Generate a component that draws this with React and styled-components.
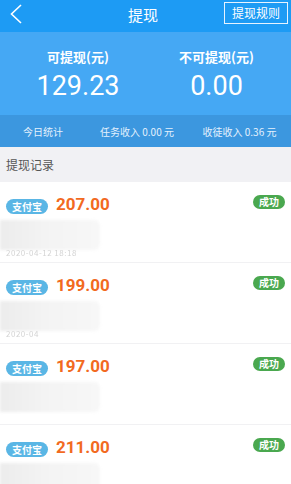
import React from "react";
import styled, { createGlobalStyle } from "styled-components";

const Global = createGlobalStyle`
  html, body { margin: 0; padding: 0; background: #ffffff; }
  body { font-family: "Noto Sans CJK SC", "Noto Sans", Roboto, sans-serif; }
  * { box-sizing: border-box; }
`;

const Page = styled.div`
  width: 291px;
  height: 484px;
  overflow: hidden;
  background: #fff;
`;

const Header = styled.div`
  height: 32px;
  background: #1d9bf4;
  display: grid;
  grid-template-columns: 60px 1fr 70px;
  align-items: center;
  color: #fff;
`;

const Back = styled.div`
  padding-left: 9px;
  display: flex;
  align-items: center;
  margin-top: -4px;
`;

const Title = styled.div`
  text-align: center;
  font-size: 15px;
  line-height: 1;
  padding-left: 5px;
  margin-top: -3px;
`;

const RuleButton = styled.div`
  justify-self: end;
  margin-right: 3px;
  margin-top: -6px;
  width: 64px;
  height: 22px;
  border: 1px solid #e6f3ff;
  font-size: 12px;
  display: flex;
  align-items: center;
  justify-content: center;
  line-height: 1;
`;

const Balance = styled.div`
  height: 83px;
  background: #45a8f4;
  display: grid;
  grid-template-columns: 156px 1fr;
  color: #fff;
  padding-top: 17px;
`;

const BalanceCol = styled.div`
  display: flex;
  flex-direction: column;
  align-items: center;
  padding-right: ${(p) => (p.$right ? "14px" : "0")};
`;

const BalanceLabel = styled.div`
  font-size: 13px;
  font-weight: 700;
  line-height: 16px;
`;

const BalanceValue = styled.div`
  font-family: Roboto, "Noto Sans", sans-serif;
  font-size: 27px;
  line-height: 32px;
  margin-top: 5px;
`;

const Stats = styled.div`
  height: 32px;
  background: #3c97df;
  display: flex;
  align-items: center;
  color: #e4f1fd;
  font-size: 10px;
`;

const StatItem = styled.div`
  width: ${(p) => p.$w}px;
  text-align: center;
`;

const SectionHead = styled.div`
  height: 35px;
  background: #f1f1f4;
  display: flex;
  align-items: center;
  padding-left: 6px;
  font-size: 12px;
  color: #555;
`;

const Item = styled.div`
  height: 81px;
  border-bottom: 1px solid #f1f1f3;
  padding: 12px 6px 0 6px;
`;

const Row = styled.div`
  display: flex;
  align-items: center;
  height: 20px;
`;

const PayBadge = styled.div`
  background: #5ab6e5;
  color: #fff;
  font-size: 10px;
  font-weight: 700;
  border-radius: 8px;
  height: 15px;
  width: 42px;
  display: flex;
  align-items: center;
  justify-content: center;
  margin-top: 4px;
`;

const Amount = styled.div`
  color: #f26a1f;
  font-family: Roboto, "Noto Sans", sans-serif;
  font-weight: 700;
  font-size: 17px;
  margin-left: 8px;
  line-height: 20px;
`;

const Status = styled.div`
  margin-left: auto;
  margin-top: -5px;
  background: #4aa84f;
  color: #fff;
  font-size: 10px;
  font-weight: 700;
  border-radius: 7px;
  height: 14px;
  width: 32px;
  display: flex;
  align-items: center;
  justify-content: center;
`;

const Redacted = styled.div`
  margin-left: -6px;
  margin-top: 6px;
  width: 100px;
  height: 30px;
  border-radius: 0 6px 6px 0;
  background: linear-gradient(90deg, #ececec 0%, #f3f3f3 45%, #f7f7f7 100%);
  filter: blur(1.5px);
`;

const DateText = styled.div`
  font-size: 8px;
  color: #d4d4d4;
  margin-top: -3px;
  letter-spacing: 0.5px;
  filter: blur(0.6px);
`;

const records = [
  { amount: "207.00", date: "2020-04-12 18:18" },
  { amount: "199.00", date: "2020-04" },
  { amount: "197.00", date: "" },
  { amount: "211.00", date: "" },
];

export default function App() {
  return (
    <Page>
      <Global />
      <Header>
        <Back>
          <svg width="14" height="20" viewBox="0 0 14 20">
            <path d="M12 1 L2.5 10 L12 19" fill="none" stroke="#fff" strokeWidth="1.6" />
          </svg>
        </Back>
        <Title>提现</Title>
        <RuleButton>提现规则</RuleButton>
      </Header>
      <Balance>
        <BalanceCol>
          <BalanceLabel>可提现(元)</BalanceLabel>
          <BalanceValue>129.23</BalanceValue>
        </BalanceCol>
        <BalanceCol $right>
          <BalanceLabel>不可提现(元)</BalanceLabel>
          <BalanceValue>0.00</BalanceValue>
        </BalanceCol>
      </Balance>
      <Stats>
        <StatItem $w={86}>今日统计</StatItem>
        <StatItem $w={102}>任务收入 0.00 元</StatItem>
        <StatItem $w={103}>收徒收入 0.36 元</StatItem>
      </Stats>
      <SectionHead>提现记录</SectionHead>
      {records.map((r, i) => (
        <Item key={i}>
          <Row>
            <PayBadge>支付宝</PayBadge>
            <Amount>{r.amount}</Amount>
            <Status>成功</Status>
          </Row>
          <Redacted />
          {r.date && <DateText>{r.date}</DateText>}
        </Item>
      ))}
    </Page>
  );
}
